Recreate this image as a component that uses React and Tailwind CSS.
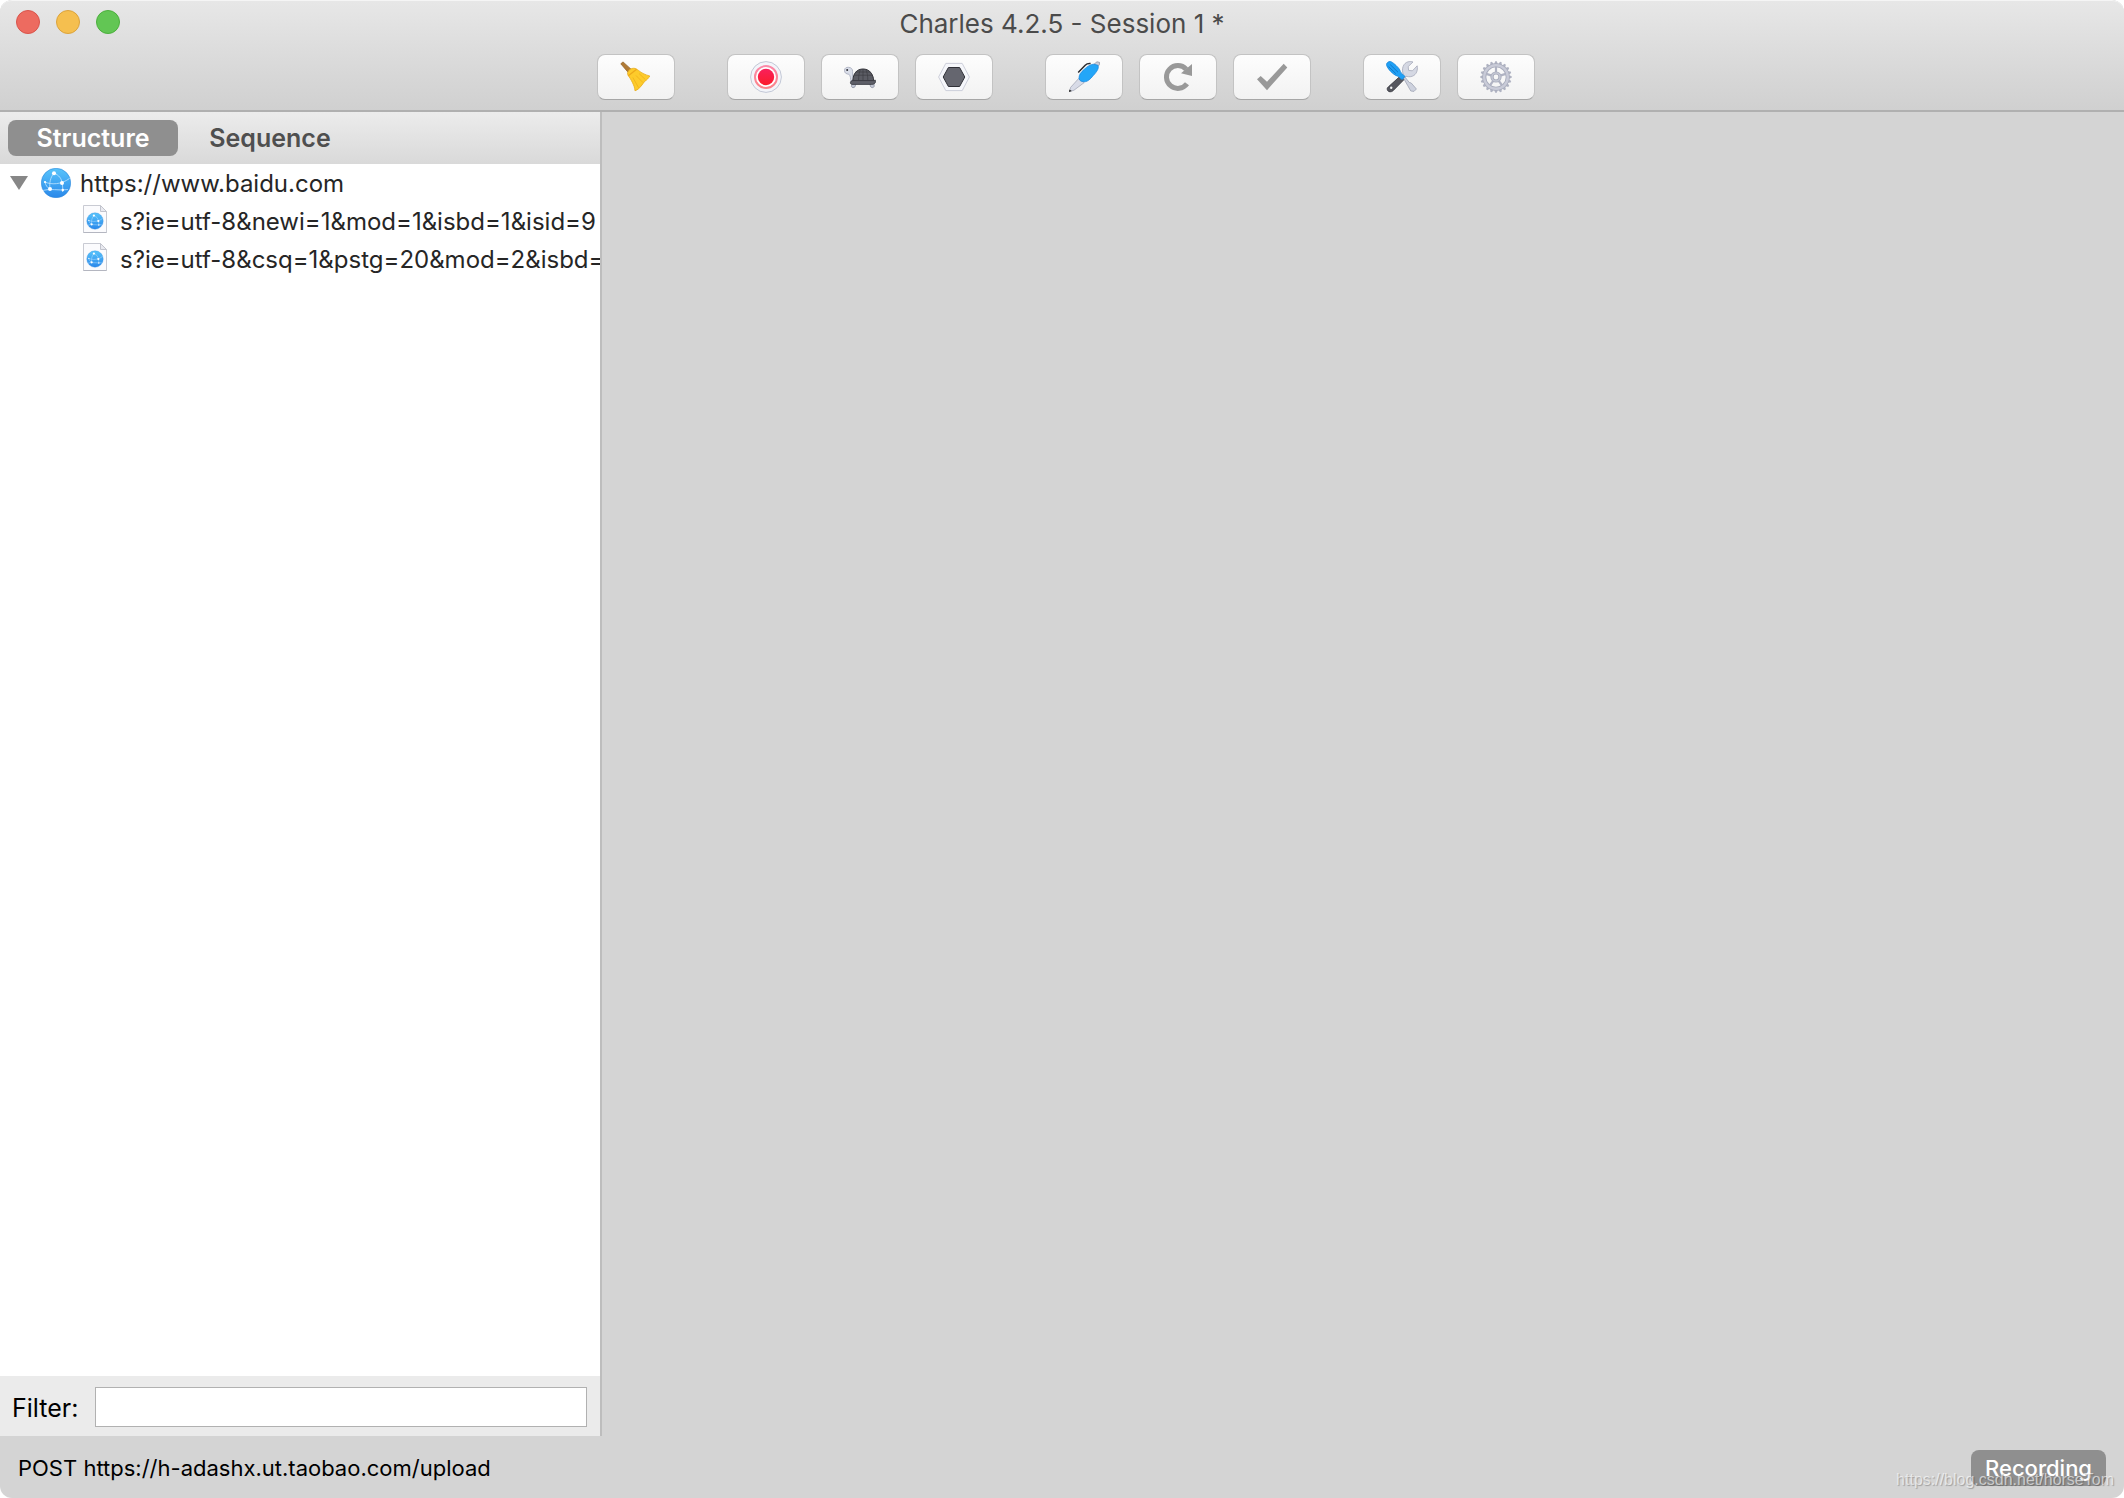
import { useState } from 'react'

const REQUESTS = [
  's?ie=utf-8&newi=1&mod=1&isbd=1&isid=9',
  's?ie=utf-8&csq=1&pstg=20&mod=2&isbd=1',
]

const TEETH = Array.from({ length: 20 }, (_, i) => i * 18)
const SPOKES = [0, 72, 144, 216, 288]

function BroomIcon() {
  return (
    <svg viewBox="0 0 32 32" className="size-8">
      <path d="M0.8 2.8 3 0.9 11 8.2 8 11.2Z" fill="#b07a35" stroke="#96642a" strokeWidth="0.8" />
      <path
        d="M7.6 13.2C7.2 9.6 11.2 6.6 15 7.4 18.6 8.4 20.4 12.6 29.8 15 28.4 17.2 27 19 24.8 20.2 22.6 23 19.4 28.6 15 29.8 14.6 24 10.8 18.6 7.6 13.2Z"
        fill="#fdcb2b"
        stroke="#e9ac1c"
        strokeWidth="0.8"
      />
      <path d="M8 15 16.6 8.2" stroke="#eda91b" strokeWidth="1.3" />
      <path d="M12.8 16.5 18.6 26.6M16 14.5 23 21.6M19 12.5 25.4 18.6" stroke="#f1b31d" strokeWidth="0.9" fill="none" />
    </svg>
  )
}

function RecordIcon() {
  return (
    <svg viewBox="0 0 32 32" className="size-8">
      <defs>
        <linearGradient id="rec" x1="0" y1="0" x2="0" y2="1">
          <stop offset="0" stopColor="#f9205c" />
          <stop offset="1" stopColor="#fb1c2a" />
        </linearGradient>
        <linearGradient id="recRing" x1="0" y1="0" x2="0" y2="1">
          <stop offset="0" stopColor="#fb8aa9" />
          <stop offset="1" stopColor="#fb8389" />
        </linearGradient>
      </defs>
      <circle cx="16" cy="16" r="15.4" fill="#f3f5fa" stroke="#c3c8d6" strokeWidth="1" />
      <circle cx="16" cy="16" r="11" fill="#fff" stroke="url(#recRing)" strokeWidth="2" />
      <circle cx="16" cy="16" r="8.2" fill="url(#rec)" />
    </svg>
  )
}

function TurtleIcon() {
  return (
    <svg viewBox="0 0 32 32" className="size-8">
      <path
        d="M0.5 9.2C0.6 7 2.4 6.2 4.4 6.3 7.2 6.4 8.6 8 8.6 10.4V15.4L10 18 7 20.4C6.4 17.4 6.8 15.2 4.8 13.2 2.4 13 0.4 12.2 0.5 9.2Z"
        fill="#d9dde8"
        stroke="#a5aabb"
        strokeWidth="0.8"
      />
      <circle cx="3.2" cy="9" r="1" fill="#2c2d33" />
      <path
        d="M8.2 22H12.4L10.8 26C10 27 7.8 26.8 7.4 25.4ZM25.4 22H30L30.2 25.4C29.6 26.8 27.6 27 26.8 26Z"
        fill="#c3c7d4"
        stroke="#8d92a2"
        strokeWidth="0.8"
      />
      <path d="M8.8 20C9 12.4 13 8 19 8S29.2 12.4 29.8 20Z" fill="#5b5c64" stroke="#2f3036" strokeWidth="1" />
      <path
        d="M9.8 14.2H28.4M11.5 11H26.6M14.6 19.4C14.6 14.8 15 12 16.4 8.6M23.8 19.4C23.8 14.8 23.4 12 21.8 8.6M19 8.6V19.4"
        stroke="#3c3d44"
        strokeWidth="0.7"
        fill="none"
      />
      <path
        d="M6.4 21.8C6.4 20.4 7.4 19.6 9 19.6H29.8L31.4 19.2V21.4C30.6 23 29 23.4 27.4 23.4H9C7.4 23.4 6.4 23.2 6.4 21.8Z"
        fill="#5e5f68"
        stroke="#35363d"
        strokeWidth="0.8"
      />
    </svg>
  )
}

function BreakpointIcon() {
  return (
    <svg viewBox="0 0 32 32" className="size-8">
      <path d="M7.8 2.4H24.2L31.4 16 24.2 29.6H7.8L0.6 16Z" fill="#f6f7fb" stroke="#c7cad6" strokeWidth="0.9" />
      <path d="M10.4 6.5H21.6L26.8 16 21.6 25.5H10.4L5.2 16Z" fill="#65666f" stroke="#303138" strokeWidth="1" />
    </svg>
  )
}

function PenIcon() {
  return (
    <svg viewBox="0 0 32 32" className="size-8">
      <path d="M10.6 17.6 16.2 21.6 6 29.2 1.6 30.6 2.6 26.4Z" fill="#d8dbe7" stroke="#a4a8b8" strokeWidth="0.8" />
      <path d="M1 31 1.4 28.4 3.8 30Z" fill="#222" />
      <path d="M25.8 3.4 29 0.8 31.6 1.4 31.2 4 28.6 6.6Z" fill="#cdd0dc" stroke="#8f93a2" strokeWidth="0.8" />
      <path
        d="M11 17.4C11 13.4 12.8 11.4 16.6 8 19.6 5.2 22.6 3.4 25.6 3.2L29.8 4.2C31.2 6.8 29.4 9.8 26.6 13 23.4 16.6 20.6 20.8 16 20.8 13.4 20.6 11.4 19.6 11 17.4Z"
        fill="#23a6f8"
        stroke="#1688df"
        strokeWidth="0.8"
      />
      <path d="M10.2 11.6 17.2 4.2C18.8 2.6 20.2 2.4 22.6 2.6" fill="none" stroke="#2b2b2e" strokeWidth="1.5" />
    </svg>
  )
}

function RepeatIcon() {
  return (
    <svg viewBox="0 0 32 32" className="size-8">
      <path d="M25 22.8A11.4 11.4 0 1 1 24.2 8.2" fill="none" stroke="#999" strokeWidth="5" />
      <path d="M30 3V15L19 12.3Z" fill="#999" />
    </svg>
  )
}

function CheckIcon() {
  return (
    <svg viewBox="0 0 32 32" className="size-8">
      <path d="M1 18.3 4.7 15 11 20.7 27.7 2.7 31.3 6.4 11 29.2Z" fill="#999" />
    </svg>
  )
}

function ToolsIcon() {
  return (
    <svg viewBox="0 0 32 32" className="size-8">
      <path
        d="M16 14.8 17.2 13C15.4 8 17 2 22.4 0.7 23.6 0.4 25.4 0.4 27 1L22.2 5.6 22.6 9.4 26.4 9.8 31.2 4.8C32 9 30.6 13.6 26.4 15.2 23.6 16.2 21.4 15.6 20 15.2L18.2 17.2Z"
        fill="#d5d8e3"
        stroke="#a6aaba"
        strokeWidth="0.8"
      />
      <path
        d="M15 14.4 19 17.6 7 29.8C5.4 31.2 2.4 31.2 1.6 29.4 0.8 27.8 1.2 26.8 2.4 25.8Z"
        fill="#56575f"
        stroke="#303138"
        strokeWidth="0.8"
      />
      <circle cx="5.2" cy="26.8" r="1.2" fill="#f4f4f4" />
      <path
        d="M17.4 17 18.8 15.8 23.2 21.4 25.2 22 30.4 28 28 30.4 24.8 30 21.6 24.4Z"
        fill="#ced2de"
        stroke="#a0a4b4"
        strokeWidth="0.8"
      />
      <path
        d="M0.5 3.4C0.6 1.8 2.6 0.3 4.2 0.5 6.4 0.8 11.2 5.2 13.4 8.2 14.2 9.6 14.4 11.2 15.4 12.2L19 15.4 16.4 18.4C13.6 18 13.8 15.6 11.2 15 7.2 13.8 0.6 7 0.5 3.4Z"
        fill="#1fa0f5"
        stroke="#1684d8"
        strokeWidth="0.8"
      />
      <path d="M4.2 3.6 12 11.2M2.6 5.6 9.8 12.6" stroke="#1272c2" strokeWidth="0.9" />
    </svg>
  )
}

function GearIcon() {
  return (
    <svg viewBox="0 0 32 32" className="size-8">
      {TEETH.map((a) => (
        <path key={a} d="M14 3.4 15.2 0.3H16.8L18 3.4Z" fill="#b0b3c2" transform={`rotate(${a} 16 16)`} />
      ))}
      <circle cx="16" cy="16" r="11.7" fill="none" stroke="#a9adbc" strokeWidth="4" />
      <circle cx="16" cy="16" r="11.8" fill="none" stroke="#c9cbd8" strokeWidth="2.4" />
      {SPOKES.map((a) => (
        <path key={a} d="M16 5.8V11.6" stroke="#b0b3c3" strokeWidth="2.2" transform={`rotate(${a} 16 16)`} />
      ))}
      <circle cx="16" cy="16" r="4" fill="none" stroke="#a9adbc" strokeWidth="3.2" />
      <circle cx="16" cy="16" r="4" fill="none" stroke="#c3c6d3" strokeWidth="1.6" />
    </svg>
  )
}

function GlobeShape() {
  return (
    <>
      <circle cx="15" cy="15" r="14.7" fill="url(#globe)" stroke="#3189dc" strokeWidth="0.6" />
      <g fill="none" stroke="#bfe4ff" strokeWidth="0.8">
        <path d="M4 14C10 16.8 20 16.8 28.6 10.4" />
        <path d="M13 5.3C9.4 9 8.2 15 9 21" />
        <path d="M13 5.3C18 7 20.6 10.6 21 15 21.6 17.6 22 20 21.6 24" />
        <path d="M2 22.4C9 20.2 17 22.8 27 21.6" />
        <path d="M4 14C4.6 17.4 6.4 19.6 9 21" />
      </g>
      <g fill="#fff">
        <circle cx="13" cy="5.3" r="2" />
        <circle cx="21" cy="15" r="2" />
        <circle cx="9" cy="21" r="2" />
        <circle cx="4" cy="14" r="1.1" />
        <circle cx="21.8" cy="22" r="1.2" />
      </g>
    </>
  )
}

function GlobeIcon() {
  return (
    <svg viewBox="0 0 30 30" className="size-[30px] shrink-0">
      <defs>
        <linearGradient id="globe" x1="0" y1="0" x2="0" y2="1">
          <stop offset="0" stopColor="#58c4fb" />
          <stop offset="1" stopColor="#2a88ea" />
        </linearGradient>
      </defs>
      <GlobeShape />
    </svg>
  )
}

function DocIcon() {
  return (
    <svg viewBox="0 0 24 28" className="mb-1 h-7 w-6 shrink-0">
      <path d="M0.5 0.5H17.5L23.5 6.5V27.5H0.5Z" fill="#fbfbfd" stroke="#c9cbd3" />
      <path d="M17.5 0.5V6.5H23.5Z" fill="#e9eaf0" stroke="#c2c4cd" />
      <path d="M0.5 27.5H23.5" stroke="#b4b6c0" />
      <g transform="translate(3.6 7.6) scale(0.56)">
        <GlobeShape />
      </g>
    </svg>
  )
}

function ToolButton({ label, children }) {
  return (
    <button
      type="button"
      aria-label={label}
      className="flex h-[46px] w-[78px] items-center justify-center rounded-lg border border-[#c3c3c3] border-b-[#a6a6a6] bg-linear-to-b from-[#fdfdfd] to-[#f2f2f2]"
    >
      {children}
    </button>
  )
}

function TitleBar() {
  return (
    <header className="rounded-t-xl border-t border-b-2 border-t-[#f5f5f5] border-b-[#b0b0b0] bg-linear-to-b from-[#e7e7e7] to-[#d0d0d0]">
      <div className="grid h-11 grid-cols-[1fr_auto_1fr] items-center px-4">
        <div className="flex gap-4 pb-0.5">
          <button type="button" aria-label="Close" className="size-6 rounded-full border border-[#d9544b] bg-[#ed6b60]" />
          <button type="button" aria-label="Minimize" className="size-6 rounded-full border border-[#dba33c] bg-[#f5bf4f]" />
          <button type="button" aria-label="Zoom" className="size-6 rounded-full border border-[#4caf3d] bg-[#62c654]" />
        </div>
        <h1 className="text-[26px] text-[#4b4b4b]">Charles 4.2.5 - Session 1 *</h1>
      </div>
      <div className="flex justify-center gap-[52px] pt-[9px] pb-[10px] pl-2">
        <ToolButton label="Clear session"><BroomIcon /></ToolButton>
        <div className="flex gap-4">
          <ToolButton label="Stop recording"><RecordIcon /></ToolButton>
          <ToolButton label="Throttling"><TurtleIcon /></ToolButton>
          <ToolButton label="Breakpoints"><BreakpointIcon /></ToolButton>
        </div>
        <div className="flex gap-4">
          <ToolButton label="Compose"><PenIcon /></ToolButton>
          <ToolButton label="Repeat"><RepeatIcon /></ToolButton>
          <ToolButton label="Validate"><CheckIcon /></ToolButton>
        </div>
        <div className="flex gap-4">
          <ToolButton label="Tools"><ToolsIcon /></ToolButton>
          <ToolButton label="Settings"><GearIcon /></ToolButton>
        </div>
      </div>
    </header>
  )
}

function Tab({ active, onClick, children }) {
  return (
    <button
      type="button"
      role="tab"
      aria-selected={active}
      onClick={onClick}
      className={`flex h-9 w-[170px] items-center justify-center rounded-lg pt-0.5 text-[25px] font-semibold ${
        active ? 'bg-[#8f8f8f] text-white' : 'text-[#4f4f4f]'
      }`}
    >
      {children}
    </button>
  )
}

export default function App() {
  const [tab, setTab] = useState('structure')
  const [open, setOpen] = useState(true)
  const [filter, setFilter] = useState('')

  return (
    <div className="bg-white font-['Inter',sans-serif]">
      <div className="flex min-h-screen flex-col overflow-hidden rounded-xl bg-[#d4d4d4]">
        <TitleBar />

        <main className="flex grow">
          <aside className="flex w-[602px] shrink-0 flex-col border-r-2 border-[#bdbdbd] bg-white">
            <div role="tablist" className="flex gap-[7px] bg-linear-to-b from-[#ececec] to-[#d9d9d9] p-2">
              <Tab active={tab === 'structure'} onClick={() => setTab('structure')}>Structure</Tab>
              <Tab active={tab === 'sequence'} onClick={() => setTab('sequence')}>Sequence</Tab>
            </div>

            <div className="grow overflow-hidden text-[24px] text-[#262626]">
              <button
                type="button"
                aria-expanded={open}
                onClick={() => setOpen(!open)}
                className="flex h-[38px] items-center pl-[10px]"
              >
                <svg viewBox="0 0 18 14" className="mr-[13px] h-[14px] w-[18px]">
                  <path d="M0 0H18L9 14Z" fill="#878787" />
                </svg>
                <GlobeIcon />
                <span className="pt-0.5 pl-[9px]">https://www.baidu.com</span>
              </button>
              {open && (
                <ul>
                  {REQUESTS.map((path) => (
                    <li key={path} className="flex h-[38px] items-center gap-[13px] pl-[83px] whitespace-nowrap">
                      <DocIcon />
                      <span className="pt-0.5">{path}</span>
                    </li>
                  ))}
                </ul>
              )}
            </div>

            <div className="flex h-[60px] items-center gap-[17px] bg-[#ebebeb] pt-0.5 pr-[13px] pl-3 text-[25px] text-black">
              <label htmlFor="filter" className="pt-1">Filter:</label>
              <input
                id="filter"
                value={filter}
                onChange={(e) => setFilter(e.target.value)}
                className="h-10 min-w-0 grow border border-[#b1b1b1] bg-white px-2 text-[22px] outline-none"
              />
            </div>
          </aside>
          <section className="grow" />
        </main>

        <footer className="relative flex h-[62px] items-center justify-between px-[18px] pt-0.5 text-[22px] text-black">
          <span>POST https://h-adashx.ut.taobao.com/upload</span>
          <span className="flex h-9 items-center rounded-lg bg-[#8f8f8f] px-[14px] font-medium text-white">Recording</span>
          <span className="absolute right-[10px] bottom-1.5 font-['Liberation_Sans',sans-serif] text-[16px] leading-6 text-white/60 [text-shadow:1px_1px_1px_rgba(0,0,0,0.25)]">
            https://blog.csdn.net/horseTom
          </span>
        </footer>
      </div>
    </div>
  )
}
